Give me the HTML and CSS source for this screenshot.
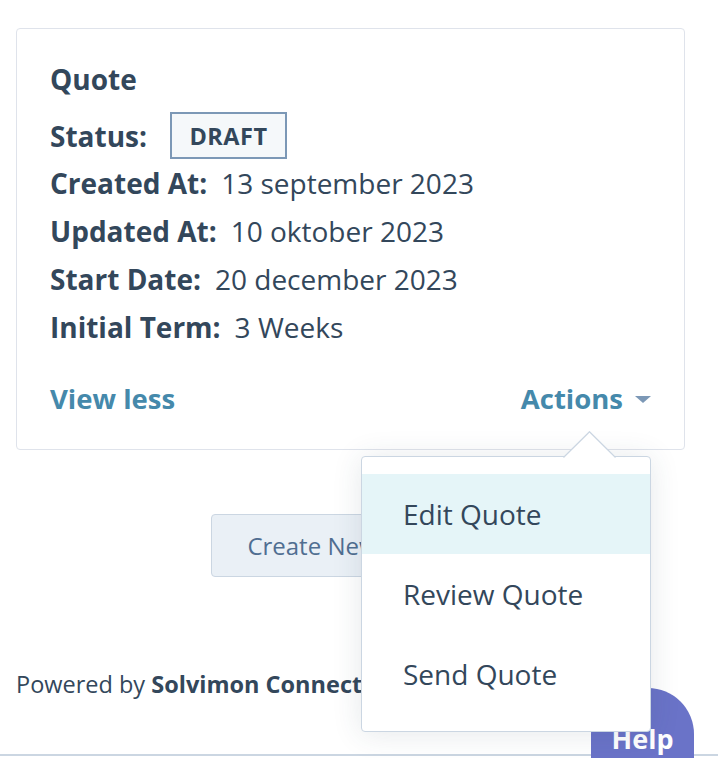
FILE: index.html
```html
<!DOCTYPE html>
<html lang="en">
<head>
<meta charset="utf-8">
<title>Quote</title>
<link rel="stylesheet" href="styles.css">
</head>
<body>
<div class="page">
  <section class="card">
    <h2 class="title">Quote</h2>
    <div class="row status-row">
      <span class="label">Status:</span>
      <span class="badge">DRAFT</span>
    </div>
    <div class="row"><span class="label">Created At:</span><span class="value">13 september 2023</span></div>
    <div class="row"><span class="label">Updated At:</span><span class="value">10 oktober 2023</span></div>
    <div class="row"><span class="label">Start Date:</span><span class="value">20 december 2023</span></div>
    <div class="row"><span class="label">Initial Term:</span><span class="value">3 Weeks</span></div>
    <div class="card-footer">
      <a class="link" href="#">View less</a>
      <div class="actions">
        <a class="link actions-toggle" href="#">Actions<span class="caret"></span></a>
        <div class="menu">
          <svg class="menu-arrow" width="53" height="27" viewBox="0 0 53 27"><path d="M0.5 26.5 L26.5 0.7 L52.5 26.5" fill="#fff" stroke="#cbd6e2" stroke-width="1.2"/></svg>
          <div class="menu-item active">Edit Quote</div>
          <div class="menu-item">Review Quote</div>
          <div class="menu-item">Send Quote</div>
        </div>
      </div>
    </div>
  </section>
  <div class="create-wrap">
    <button class="create-btn">Create New Quote</button>
  </div>
  <p class="powered">Powered by <strong>Solvimon Connect</strong></p>
</div>
<div class="bottom-line"></div>
<button class="help">Help</button>
</body>
</html>
```
FILE: styles.css
```css
html, body {
  margin: 0;
  padding: 0;
  background: #fff;
  height: 758px;
  overflow: hidden;
}
body {
  position: relative;
  font-family: "Open Sans", "Noto Sans", sans-serif;
  color: #33475b;
}
.page {
  padding: 28px 33px 0 16px;
}
.card {
  border: 1px solid #dfe3eb;
  border-radius: 4px;
  padding: 32px 33px 32px 33px;
}
.title {
  margin: 0;
  font-size: 28px;
  font-weight: 700;
  line-height: 36px;
}
.row {
  display: flex;
  align-items: center;
  height: 48px;
  font-size: 28px;
}
.status-row {
  margin-top: 15px;
  height: 47px;
  gap: 23px;
}
.label {
  font-weight: 700;
}
.value {
  margin-left: 14px;
}
.badge {
  box-sizing: border-box;
  height: 47px;
  width: 117px;
  display: flex;
  align-items: center;
  justify-content: center;
  border: 2px solid #7c98b6;
  background: #f5f8fa;
  font-size: 23.5px;
  font-weight: 700;
  letter-spacing: 0.5px;
}
.card-footer {
  margin-top: 30px;
  display: flex;
  justify-content: space-between;
  align-items: center;
  height: 36px;
}
.link {
  color: #4589ab;
  font-size: 27.5px;
  font-weight: 700;
  text-decoration: none;
  line-height: 36px;
}
.actions {
  position: relative;
}
.actions-toggle {
  display: flex;
  align-items: center;
}
.caret {
  margin-left: 12px;
  width: 0;
  height: 0;
  border-left: 8px solid transparent;
  border-right: 8px solid transparent;
  border-top: 7px solid #7c98b6;
}
.menu {
  position: absolute;
  right: 0;
  top: calc(100% + 39px);
  width: 290px;
  box-sizing: border-box;
  background: #fff;
  border: 1px solid #cbd6e2;
  border-radius: 4px;
  padding: 17px 0;
  box-shadow: 0 2px 30px rgba(45, 62, 80, 0.12);
  z-index: 5;
}
.menu-arrow {
  position: absolute;
  top: -26px;
  left: 201px;
  display: block;
}
.menu-item {
  height: 80px;
  display: flex;
  align-items: center;
  padding-left: 41px;
  font-size: 28px;
  font-weight: 400;
}
.menu-item.active {
  background: #e5f5f8;
}
.create-wrap {
  display: flex;
  justify-content: center;
  margin-top: 64px;
}
.create-btn {
  height: 63px;
  padding: 0 35px;
  background: #eaf0f6;
  border: 1px solid #cbd6e2;
  border-radius: 4px;
  color: #506e91;
  font-family: inherit;
  font-size: 24px;
}
.powered {
  margin: 92px 0 0 0;
  font-size: 23.5px;
  line-height: 30px;
}
.powered strong {
  font-weight: 700;
}
.bottom-line {
  position: absolute;
  left: 0;
  right: 0;
  top: 754px;
  height: 2px;
  background: #cbd6e2;
}
.help {
  position: absolute;
  left: 591px;
  top: 688px;
  width: 103px;
  height: 90px;
  border: 0;
  border-radius: 46px 46px 0 0;
  background: #6a73c8;
  color: #fff;
  font-family: inherit;
  font-size: 27px;
  font-weight: 700;
  padding: 32px 0 0 0;
  text-align: center;
  display: flex;
  justify-content: center;
  align-items: flex-start;
  z-index: 3;
}
```
